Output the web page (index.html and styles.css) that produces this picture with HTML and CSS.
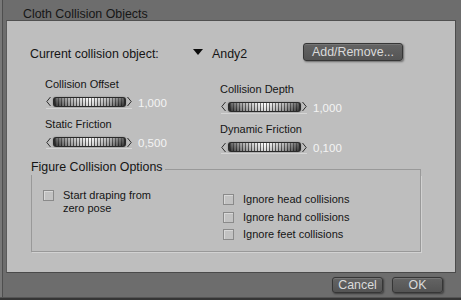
FILE: index.html
```html
<!DOCTYPE html>
<html lang="en">
<head>
    <meta charset="UTF-8">
    <title>Cloth Collision Objects</title>
    <link rel="stylesheet" href="styles.css">
</head>
<body>
    <div class="dialog">
        <div class="titlebar">Cloth Collision Objects</div>

        <div class="panel">
            <div class="object-row">
                <span class="object-label">Current collision object:</span>
                <svg class="dropdown" width="10" height="6" viewBox="0 0 10 6"><path d="M0 0H10L5 6Z"/></svg>
                <span class="object-name">Andy2</span>
                <button class="btn btn-wide">Add/Remove...</button>
            </div>

            <div class="params">
                <div class="param-col">
                    <div class="param">
                        <div class="param-label">Collision Offset</div>
                        <div class="dial-row">
                            <div class="dial">
                                <svg class="dial-arrow" width="5" height="11" viewBox="0 0 5 11"><path d="M4.5 1L0.8 5.5L4.5 10"/></svg>
                                <span class="dial-track"></span>
                                <svg class="dial-arrow" width="5" height="11" viewBox="0 0 5 11"><path d="M0.5 1L4.2 5.5L0.5 10"/></svg>
                            </div>
                            <span class="dial-value">1,000</span>
                        </div>
                    </div>
                    <div class="param">
                        <div class="param-label">Static Friction</div>
                        <div class="dial-row">
                            <div class="dial">
                                <svg class="dial-arrow" width="5" height="11" viewBox="0 0 5 11"><path d="M4.5 1L0.8 5.5L4.5 10"/></svg>
                                <span class="dial-track"></span>
                                <svg class="dial-arrow" width="5" height="11" viewBox="0 0 5 11"><path d="M0.5 1L4.2 5.5L0.5 10"/></svg>
                            </div>
                            <span class="dial-value">0,500</span>
                        </div>
                    </div>
                </div>

                <div class="param-col param-col-right">
                    <div class="param">
                        <div class="param-label">Collision Depth</div>
                        <div class="dial-row">
                            <div class="dial">
                                <svg class="dial-arrow" width="5" height="11" viewBox="0 0 5 11"><path d="M4.5 1L0.8 5.5L4.5 10"/></svg>
                                <span class="dial-track"></span>
                                <svg class="dial-arrow" width="5" height="11" viewBox="0 0 5 11"><path d="M0.5 1L4.2 5.5L0.5 10"/></svg>
                            </div>
                            <span class="dial-value">1,000</span>
                        </div>
                    </div>
                    <div class="param">
                        <div class="param-label">Dynamic Friction</div>
                        <div class="dial-row">
                            <div class="dial">
                                <svg class="dial-arrow" width="5" height="11" viewBox="0 0 5 11"><path d="M4.5 1L0.8 5.5L4.5 10"/></svg>
                                <span class="dial-track"></span>
                                <svg class="dial-arrow" width="5" height="11" viewBox="0 0 5 11"><path d="M0.5 1L4.2 5.5L0.5 10"/></svg>
                            </div>
                            <span class="dial-value">0,100</span>
                        </div>
                    </div>
                </div>
            </div>

            <div class="group">
                <div class="group-head">
                    <span class="group-title">Figure Collision Options</span>
                    <span class="group-rule"></span>
                </div>
                <div class="group-body">
                    <label class="check check-wrap">
                        <span class="check-box"></span>
                        <span class="check-text">Start draping from zero pose</span>
                    </label>
                    <div class="check-list">
                        <label class="check"><span class="check-box"></span><span class="check-text">Ignore head collisions</span></label>
                        <label class="check"><span class="check-box"></span><span class="check-text">Ignore hand collisions</span></label>
                        <label class="check"><span class="check-box"></span><span class="check-text">Ignore feet collisions</span></label>
                    </div>
                </div>
            </div>
        </div>

        <div class="footer">
            <button class="btn">Cancel</button>
            <button class="btn">OK</button>
        </div>
        <div class="taskstrip"></div>
    </div>
</body>
</html>
```

FILE: styles.css
```css
body {
    margin: 0;
    font-family: 'Liberation Sans', Arial, sans-serif;
    color: #151515;
}

.dialog {
    width: 461px;
    height: 300px;
    display: flex;
    flex-direction: column;
    background: linear-gradient(90deg, #787878 0 2px, #4e4e4e 2px 3px, #6d6d6d 3px);
}

.titlebar {
    height: 20px;
    box-sizing: border-box;
    padding: 9px 0 0 23px;
    font-size: 12.4px;
    line-height: 11px;
    color: #161616;
    white-space: nowrap;
}

.panel {
    height: 253px;
    box-sizing: border-box;
    margin: 0 5px 0 6px;
    background: #bebebe;
    border-top: 1px solid #505050;
    border-left: 1px solid #5c5c5c;
    border-right: 1px solid #4c4c4c;
    border-bottom: 1px solid #4a4a4a;
}

/* current object row */
.object-row {
    display: flex;
    align-items: flex-start;
    margin-top: 22px;
    padding-left: 23px;
    font-size: 12.4px;
    line-height: 15px;
}

.object-label {
    width: 163px;
    margin-top: 3.5px;
}

.dropdown {
    margin-top: 6px;
    fill: #0c0c0c;
}

.object-name {
    width: 91px;
    margin: 3.5px 0 0 9px;
}

.btn {
    height: 17px;
    width: 51px;
    padding: 0;
    font-family: inherit;
    font-size: 12.4px;
    line-height: 15px;
    color: #dadada;
    background: linear-gradient(#646464, #545454);
    border: 1px solid #363636;
    border-radius: 3px;
    box-shadow: inset 0 1px 0 rgba(255, 255, 255, 0.12), 1px 1px 2px rgba(0, 0, 0, 0.45);
}

.btn-wide {
    width: 100px;
    height: 18px;
}

/* dials */
.params {
    display: grid;
    grid-template-columns: 175px auto;
    margin-top: 16px;
    padding-left: 38px;
}

.param-col-right {
    padding-top: 5px;
}

.param + .param {
    margin-top: 9.5px;
}

.param-label {
    font-size: 11px;
    line-height: 13px;
}

.dial-row {
    display: flex;
    align-items: flex-start;
    margin-top: 5px;
}

.dial {
    display: flex;
    align-items: center;
    width: 86px;
    height: 12px;
    margin-left: 1px;
    border-bottom: 1px solid #d6d6d6;
}

.dial-arrow {
    fill: none;
    stroke: #2e2e2e;
    stroke-width: 1;
}

.dial-track {
    width: 73px;
    height: 10px;
    box-sizing: border-box;
    margin: 0 1px 0 2px;
    border: 1px solid #2a2a2a;
    border-left-width: 2px;
    border-right-width: 2px;
    border-radius: 3px;
    background:
        linear-gradient(180deg, rgba(255, 255, 255, 0.2), rgba(0, 0, 0, 0.15)),
        repeating-linear-gradient(90deg, rgba(24, 24, 24, 0.7) 0 1px, rgba(0, 0, 0, 0) 1px 3px),
        linear-gradient(90deg, #404040, #a8a8a8 20%, #ffffff 50%, #a8a8a8 80%, #404040);
    box-shadow: 0 0 2px rgba(0, 0, 0, 0.3);
}

.dial-value {
    margin: 2px 0 0 6px;
    font-size: 11.5px;
    line-height: 11px;
    color: #f4f4f4;
}

/* figure options */
.group {
    width: 390px;
    margin: 6px 0 0 24px;
}

.group-head {
    display: flex;
    height: 15px;
}

.group-title {
    font-size: 12.4px;
    line-height: 15px;
    white-space: nowrap;
}

.group-rule {
    flex: 1;
    height: 6px;
    box-sizing: border-box;
    margin: 9px 0 0 2px;
    border-top: 1px solid #999;
    border-right: 1px solid #999;
}

.group-body {
    display: flex;
    height: 77px;
    box-sizing: border-box;
    border: 1px solid #999;
    border-top: none;
    box-shadow: 1px 1px 0 #d2d2d2;
}

.check {
    display: flex;
    align-items: center;
    height: 17.4px;
    font-size: 11px;
    line-height: 13px;
}

.check-wrap {
    align-items: flex-start;
    height: auto;
    width: 120px;
    margin: 14px 0 0 11px;
}

.check-wrap .check-box {
    margin-top: 1px;
}

.check-wrap .check-text {
    width: 100px;
}

.check-list {
    margin: 16px 0 0 60px;
}

.check-box {
    width: 11px;
    height: 11px;
    box-sizing: border-box;
    flex-shrink: 0;
    margin-right: 9px;
    background: #c2c2c2;
    border: 1px solid #8a8a8a;
    box-shadow: inset 1px 1px 0 #d8d8d8;
}

/* bottom buttons */
.footer {
    display: flex;
    justify-content: flex-end;
    gap: 9px;
    height: 24px;
    box-sizing: border-box;
    padding: 4px 18px 0 0;
}

.footer .btn {
    height: 16px;
    line-height: 14px;
}

.taskstrip {
    height: 3px;
    box-sizing: border-box;
    background: #353535;
    border-top: 1px solid #555;
}
```
